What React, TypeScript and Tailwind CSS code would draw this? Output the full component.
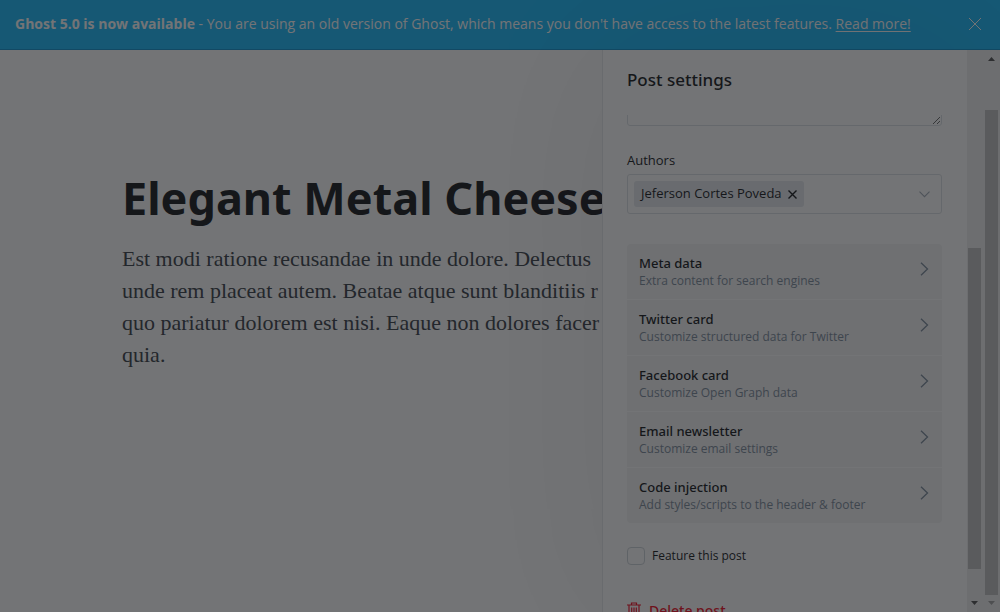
import React from "react";

const cards = [
  { title: "Meta data", text: "Extra content for search engines" },
  { title: "Twitter card", text: "Customize structured data for Twitter" },
  { title: "Facebook card", text: "Customize Open Graph data" },
  { title: "Email newsletter", text: "Customize email settings" },
  { title: "Code injection", text: "Add styles/scripts to the header & footer" },
];

function Banner() {
  return (
    <header className="flex h-[50px] shrink-0 items-center justify-between border-b border-[#0d94d1] bg-[#17b9fa] pr-[18px] pb-0.5 pl-[15px] text-white">
      <p className="text-sm leading-5 whitespace-nowrap">
        <strong className="font-bold">Ghost 5.0 is now available</strong> - You are using an old version of Ghost,
        which means you don't have access to the latest features.{" "}
        <a href="#release" className="underline underline-offset-2">
          Read more!
        </a>
      </p>
      <button type="button" aria-label="Close" className="shrink-0">
        <svg width="14" height="14" viewBox="0 0 14 14" fill="none" stroke="currentColor" strokeWidth="1">
          <path d="M1 1l12 12M13 1L1 13" />
        </svg>
      </button>
    </header>
  );
}

function Editor() {
  return (
    <main className="min-w-0 flex-1 overflow-hidden pt-[116px] pl-[122px] whitespace-nowrap">
      <h1 className="font-['Noto_Sans',sans-serif] text-[45px] leading-[64px] font-bold">Elegant Metal Cheese</h1>
      <p className="mt-[13px] font-['Georgia','Liberation_Serif',serif] text-[22px] leading-8 text-[#394047]">
        Est modi ratione recusandae in unde dolore. Delectus
        <br />
        unde rem placeat autem. Beatae atque sunt blanditiis r
        <br />
        quo pariatur dolorem est nisi. Eaque non dolores facer
        <br />
        quia.
      </p>
    </main>
  );
}

function Settings() {
  return (
    <aside className="flex w-[365px] shrink-0 flex-col overflow-hidden border-l border-[#e6e9eb] bg-white shadow-[0_0_160px_rgba(0,0,0,0.07)]">
      <h2 className="h-[65px] shrink-0 px-6 pt-[18px] font-['Noto_Sans',sans-serif] text-[17px] leading-6 font-medium">
        Post settings
      </h2>
      <div className="min-h-0 flex-1 overflow-hidden pr-[25px] pl-6">
        <div className="flex h-[11px] flex-col justify-end overflow-hidden">
          <textarea
            aria-label="Excerpt"
            className="block h-20 w-full shrink-0 resize rounded-[3px] border border-[#dde1e5] outline-none"
          />
        </div>
        <label htmlFor="author" className="mt-[25px] block text-[13px] leading-[18px]">
          Authors
        </label>
        <div className="mt-[5px] flex h-10 items-center rounded-[3px] border border-[#dde1e5] pr-[11px] pl-1.5">
          <span className="flex h-[26px] items-center gap-1.5 rounded-[3px] bg-[#e5e9ed] px-[7px] text-[13px] whitespace-nowrap text-[#15171a]">
            Jeferson Cortes Poveda
            <button type="button" aria-label="Remove Jeferson Cortes Poveda">
              <svg width="9" height="9" viewBox="0 0 9 9" stroke="currentColor" strokeWidth="1.4">
                <path d="M.5.5l8 8M8.5.5l-8 8" />
              </svg>
            </button>
          </span>
          <input id="author" className="min-w-0 flex-1 outline-none" />
          <svg width="11" height="7" viewBox="0 0 11 7" fill="none" stroke="#a3adb8" strokeWidth="1.1">
            <path d="M.5.7l5 5 5-5" />
          </svg>
        </div>
        <ul className="mt-[30px] divide-y divide-white overflow-hidden rounded-[4px] bg-[#f4f5f6]">
          {cards.map((card) => (
            <li key={card.title}>
              <button type="button" className="flex h-[55px] w-full items-center justify-between pr-[13px] pl-3 text-left">
                <span className="flex flex-col">
                  <span className="font-['Noto_Sans',sans-serif] text-[13px] leading-[18px] font-medium">{card.title}</span>
                  <span className="text-xs leading-[18px] text-[#7c8b9a]">{card.text}</span>
                </span>
                <svg className="mb-1.5" width="9" height="14" viewBox="0 0 9 14" fill="none" stroke="#7c8b9a" strokeWidth="1.3">
                  <path d="M1 .7L7.5 7 1 13.300" />
                </svg>
              </button>
            </li>
          ))}
        </ul>
        <label className="mt-6 flex items-center gap-[7px] text-xs leading-[18px] text-[#15171a]">
          <input type="checkbox" className="size-[18px] appearance-none rounded-[4px] border border-[#ced4d9]" />
          Feature this post
        </label>
        <button
          type="button"
          className="mt-9 flex items-center gap-2 font-['Noto_Sans',sans-serif] text-sm leading-5 font-medium text-[#f50b23]"
        >
          <svg width="14" height="18" viewBox="0 0 14 18" fill="none" stroke="currentColor" strokeWidth="1.2">
            <path d="M0 3h14M4.500 3V1h5v2M2 3v13.500h10V3M4.700 5.500v8.500M7 5.500v8.500M9.300 5.500v8.500" />
          </svg>
          Delete post
        </button>
      </div>
    </aside>
  );
}

function Arrow({ up, color }: { up?: boolean; color: string }) {
  return (
    <svg width="7" height="4" viewBox="0 0 7 4" fill={color}>
      <path d={up ? "M0 4L3.500 0L7 4z" : "M0 0L3.500 4L7 0z"} />
    </svg>
  );
}

export default function App() {
  return (
    <div className="relative flex h-screen flex-col overflow-hidden bg-white font-['Open_Sans','Noto_Sans',sans-serif] text-[#15171a]">
      <Banner />
      <div className="flex min-h-0 flex-1">
        <Editor />
        <Settings />
        <div className="flex w-4 shrink-0 flex-col items-center bg-[#f1f1f1] pr-0.5 pb-[7px]" aria-hidden="true">
          <div className="mt-[198px] w-[13px] flex-1 bg-[#c1c1c1]" />
          <div className="h-8 shrink-0" />
          <Arrow color="#505050" />
        </div>
        <div className="flex w-[17px] shrink-0 flex-col items-center bg-[#f1f1f1] pt-[7px] pb-[7px]" aria-hidden="true">
          <Arrow up color="#505050" />
          <div className="mt-[49px] mb-1.5 w-[13px] flex-1 bg-[#c1c1c1]" />
          <Arrow color="#a3a3a3" />
        </div>
      </div>
      <div className="pointer-events-none absolute inset-0 bg-[#15171a]/60" />
    </div>
  );
}
